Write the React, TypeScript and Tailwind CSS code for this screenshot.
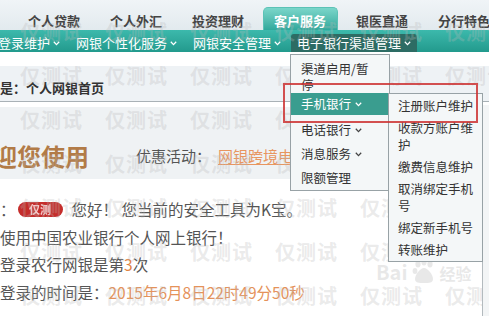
import React from 'react';

const tabs = ['个人贷款', '个人外汇', '投资理财', '客户服务', '银医直通', '分行特色'];

const level2 = ['注册账户维护', '收款方账户维护', '缴费信息维护', '取消绑定手机号', '绑定新手机号', '转账维护'];

function Chev({ className = '' }: { className?: string }) {
    return (
        <svg width="7" height="5" viewBox="0 0 7 5" className={className}>
            <path d="M0.8 0.8L3.5 3.6L6.2 0.8" fill="none" stroke="currentColor" strokeWidth="1.3" />
        </svg>
    );
}

// faint "仅测试" watermark grid laid over the whole shot
function Watermarks() {
    const rows = Array.from({ length: 7 });
    const cols = Array.from({ length: 6 });
    return (
        <div className="pointer-events-none absolute inset-0 flex flex-col pt-[20px]">
            {rows.map((_, r) => (
                <div key={r} className="flex h-[44px] shrink-0 pl-[20px]">
                    {cols.map((_, c) => (
                        <div
                            key={c}
                            className="w-[85px] shrink-0 text-[20px] font-bold leading-[24px] tracking-[1px] text-[rgba(185,185,185,0.3)]"
                        >
                            仅测试
                        </div>
                    ))}
                </div>
            ))}
        </div>
    );
}

export default function App() {
    return (
        <div className="relative h-[316px] w-[489px] overflow-hidden bg-white font-['Noto_Sans_CJK_SC','Microsoft_YaHei',sans-serif]">
            {/* Top tabs */}
            <div className="flex h-[30px] items-end overflow-hidden bg-linear-to-b from-[#f0f4f7] to-[#e2eaee] pl-[13px]">
                {tabs.map((t) => (
                    <div key={t} className="flex w-[82px] shrink-0 justify-center">
                        {t === '客户服务' ? (
                            <div className="h-[23px] w-[75px] rounded-t-[5px] border border-b-0 border-[#5cc2b6] bg-linear-to-b from-[#7ad6ca] to-[#2fa99c] pt-[6px] text-center text-[13px] font-bold leading-[14px] text-white">
                                {t}
                            </div>
                        ) : (
                            <div className="h-[23px] pt-[7px] text-[13px] font-bold leading-[14px] text-[#444]">{t}</div>
                        )}
                    </div>
                ))}
            </div>

            {/* Teal sub menu */}
            <div className="flex h-[22px] items-end bg-linear-to-b from-[#3cb9ac] to-[#229a8d] text-[13px] leading-[18px] text-white">
                <div className="ml-[-2px] flex h-[18px] items-center gap-[3px]">
                    登录维护 <Chev />
                </div>
                <div className="ml-[16px] flex h-[18px] items-center gap-[3px]">
                    网银个性化服务 <Chev />
                </div>
                <div className="ml-[16px] flex h-[18px] items-center gap-[3px]">
                    网银安全管理 <Chev />
                </div>
                <div className="ml-[10px] flex h-[18px] items-center gap-[3px] rounded-t-[3px] bg-[#2d6c64] px-[6px]">
                    电子银行渠道管理 <Chev />
                </div>
            </div>

            <div className="h-[14px]" />

            {/* Breadcrumb */}
            <div className="h-[36px] border-b border-[#a9b1b6] bg-[#eef2f5] pt-[15px] text-[13px] font-bold leading-[14px] text-[#333]">
                是：个人网银首页
            </div>

            <div className="h-[5px]" />

            {/* Welcome panel */}
            <div className="flex h-[72px] items-center whitespace-nowrap bg-[#eff2f4] pt-[26px]">
                <span className="ml-[-31px] text-[24px] font-bold leading-[28px] text-[#b27b47]">欢迎您使用</span>
                <span className="ml-[47px] text-[15px] leading-[20px] text-[#555]">优惠活动：</span>
                <span className="ml-[7px] text-[15px] leading-[20px] text-[#e8955f] underline underline-offset-2">
                    网银跨境电商活动
                </span>
            </div>

            {/* Greeting lines */}
            <div className="mt-[17px] whitespace-nowrap text-[15.5px] leading-[27.5px] text-[#555]">
                <div className="flex items-center">
                    <span>：</span>
                    <span className="ml-[2px] flex h-[15px] w-[45px] items-center justify-center rounded-full bg-[#c52d2b] text-[11px] font-bold leading-[15px] text-[#f6caca] blur-[0.6px]">
                        仅测
                    </span>
                    <span className="ml-[9px]">您好！ 您当前的安全工具为K宝。</span>
                </div>
                <div>使用中国农业银行个人网上银行！</div>
                <div>
                    登录农行网银是第<span className="text-[#e0813f]">3</span>次
                </div>
                <div>
                    登录的时间是：<span className="text-[#e5925a]">2015年6月8日22时49分50秒</span>
                </div>
            </div>

            <Watermarks />

            {/* Baidu jingyan mark */}
            <div className="pointer-events-none absolute left-[376px] top-[258px] flex items-end gap-[3px] text-[rgba(190,190,190,0.35)]">
                <span className="text-[20px] font-bold leading-[24px]">Bai</span>
                <svg width="26" height="26" viewBox="0 0 26 26" fill="currentColor">
                    <ellipse cx="7" cy="6" rx="2.6" ry="3.4" />
                    <ellipse cx="13" cy="4" rx="2.6" ry="3.4" />
                    <ellipse cx="19" cy="6" rx="2.6" ry="3.4" />
                    <ellipse cx="4" cy="13" rx="2.4" ry="3" />
                    <path d="M13 10c4 0 9 7 9 11s-4 4-9 4-9 0-9-4 5-11 9-11z" />
                </svg>
                <span className="text-[16px] font-bold leading-[22px]">经验</span>
            </div>

            {/* right side strip */}
            <div className="absolute bottom-0 left-[482px] top-[105px] w-[7px] border-l border-[#b3babe] bg-[#f3f5f6]" />

            {/* Level 1 dropdown */}
            <div className="absolute left-[290px] top-[54px] w-[100px] border border-[#98a2a6] bg-[#f4f7f8] pt-[6px] text-[12.5px] text-[#333]">
                <div className="pl-[10px] pr-[12px] leading-[16px]">渠道启用/暂停</div>
                <div className="flex h-[22px] items-center gap-[4px] bg-[#3a9d8f] pl-[10px] text-white">
                    手机银行 <Chev />
                </div>
                <div className="h-[3px]" />
                <div className="flex h-[24px] items-center gap-[4px] pl-[10px]">
                    电话银行 <Chev className="text-[#444]" />
                </div>
                <div className="flex h-[24px] items-center gap-[4px] pl-[10px]">
                    消息服务 <Chev className="text-[#444]" />
                </div>
                <div className="flex h-[24px] items-center pl-[10px]">限额管理</div>
            </div>

            {/* Level 2 dropdown */}
            <div className="absolute left-[388px] top-[93px] w-[95px] border border-[#98a2a6] bg-[#f4f7f8] pb-[1px] pl-[9px] pr-[6px] text-[12.5px] leading-[17px] text-[#333]">
                {level2.map((t) => (
                    <div key={t} className="py-[2.5px]">
                        {t}
                    </div>
                ))}
            </div>

            {/* red annotation */}
            <div className="absolute left-[283px] top-[83px] h-[40px] w-[195px] border-2 border-[rgba(205,50,50,0.85)]" />
        </div>
    );
}
